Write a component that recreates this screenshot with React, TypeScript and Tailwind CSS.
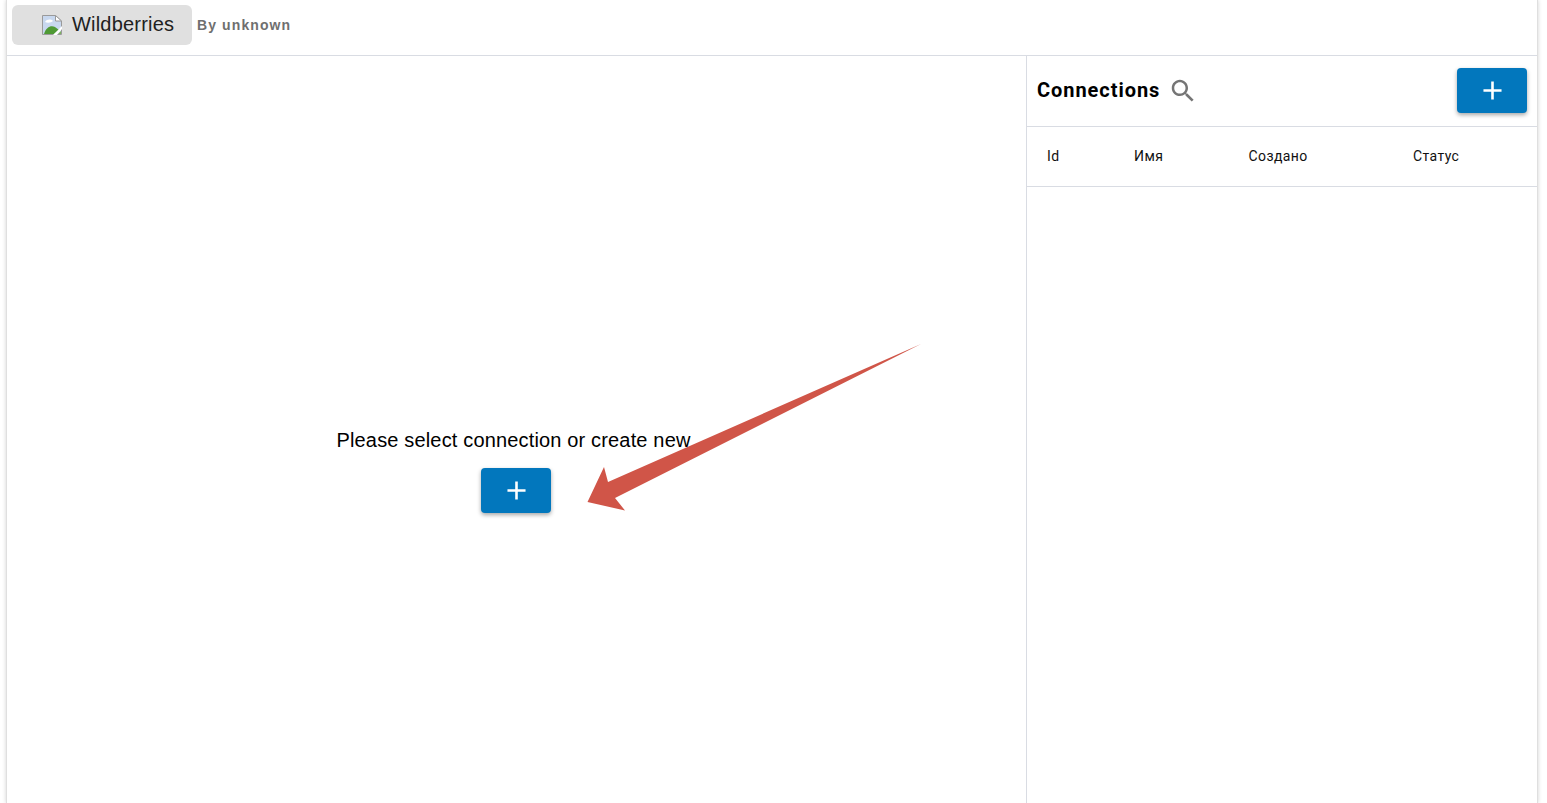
const COLUMNS = [
  { label: 'Id', width: 'w-[87px]' },
  { label: 'Имя', width: 'w-[114.5px]' },
  { label: 'Создано', width: 'w-[164.5px]' },
  { label: 'Статус', width: 'w-[100px]' },
]

function AddButton() {
  return (
    <button
      type="button"
      className="flex h-[45px] w-[70px] items-center justify-center rounded bg-[#0277bd] text-white shadow-[0_2px_4px_rgba(0,0,0,0.35)]"
    >
      <svg width="31" height="31" viewBox="0 0 24 24" fill="currentColor">
        <path d="M19 13h-6v6h-2v-6H5v-2h6V5h2v6h6v2z" />
      </svg>
    </button>
  )
}

// битая картинка, как её рисует браузер
function BrokenImage() {
  return (
    <svg width="20" height="20" viewBox="0 0 20 20" className="shrink-0">
      <path d="M0.5 0.5H13.5L19.5 6V19.5H0.5Z" fill="#c8d8ef" stroke="#9a9a9a" />
      <path d="M13.5 0.5V6H19.5Z" fill="#fff" stroke="#9a9a9a" />
      <path d="M3 7C5 4 9 4 11 6C9 8 5 8 3 7Z" fill="#fff" />
      <path d="M2 19C4 12 9 10 13 12L17 15L12 19Z" fill="#4f9a35" />
      <path d="M11 20L20 11V14L15 20Z" fill="#fff" />
      <path d="M16 19L19 16V19Z" fill="#7fb35f" />
    </svg>
  )
}

export default function App() {
  return (
    <div className="relative h-[803px] w-full overflow-hidden bg-white font-['Liberation_Sans',sans-serif]">
      <div className="ml-[6px] flex h-full w-[1532px] flex-col border-x border-[#dfdfdf] shadow-[0_0_4px_rgba(0,0,0,0.18)]">
        <header className="flex h-[56px] shrink-0 items-center border-b border-[#d9dce3] pb-[6px] pl-[5px]">
          <div className="flex h-[40px] w-[180px] items-center gap-[10px] rounded-md bg-[#e0e0e0] pl-[30px]">
            <BrokenImage />
            <span className="pb-[2px] text-[20px] tracking-[0.2px] text-[#212121]">Wildberries</span>
          </div>
          <span className="ml-[5px] mt-[2px] text-[14px] font-bold tracking-[1.1px] text-[#6f6f6f]">By unknown</span>
        </header>

        <div className="flex min-h-0 flex-1">
          <main className="flex flex-1 flex-col items-center pr-[1px] pt-[373px]">
            <p className="mr-[5px] h-[23px] text-[20px] leading-[23px] tracking-[0.16px] text-black">
              Please select connection or create new
            </p>
            <div className="mt-[16px]">
              <AddButton />
            </div>
          </main>

          <aside className="flex w-[511px] shrink-0 flex-col border-l border-[#d9dce3]">
            <div className="flex h-[71px] items-center border-b border-[#d9dce3] pb-[2px] pl-[10px] pr-[10px]">
              <h2 className="font-['Roboto',sans-serif] text-[20px] font-bold tracking-[0.95px] text-black">Connections</h2>
              <svg width="30" height="30" viewBox="0 0 24 24" fill="currentColor" className="ml-[8px] mt-[2px] text-[#757575]">
                <path d="M15.5 14h-.79l-.28-.27C15.41 12.59 16 11.11 16 9.5 16 5.91 13.09 3 9.5 3S3 5.91 3 9.5 5.91 16 9.5 16c1.61 0 3.09-.59 4.23-1.57l.27.28v.79l5 4.99L20.49 19l-4.99-5zm-6 0C7.01 14 5 11.99 5 9.5S7.01 5 9.5 5 14 7.01 14 9.5 11.99 14 9.5 14z" />
              </svg>
              <div className="ml-auto">
                <AddButton />
              </div>
            </div>
            <div className="flex h-[60px] items-center border-b border-[#d9dce3] pl-[20px] font-['Roboto',sans-serif] text-[14px] tracking-[0.4px] text-[#111]">
              {COLUMNS.map((col) => (
                <span key={col.label} className={col.width}>
                  {col.label}
                </span>
              ))}
            </div>
          </aside>
        </div>
      </div>

      {/* стрелка-аннотация поверх страницы */}
      <svg width="1547" height="803" viewBox="0 0 1547 803" className="pointer-events-none absolute left-0 top-0">
        <polygon points="921,344 608,482 604,467 587.5,502 625,510.5 615,498" fill="#d05548" />
      </svg>
    </div>
  )
}
